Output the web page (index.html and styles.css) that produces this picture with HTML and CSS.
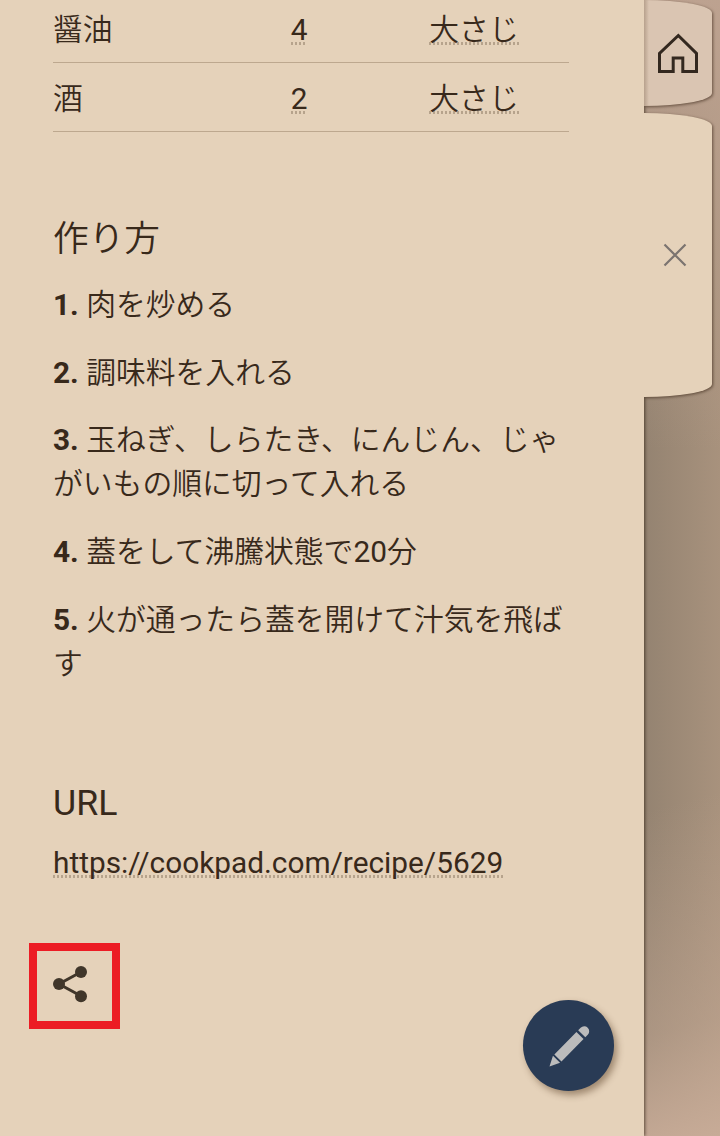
FILE: index.html
```
<!DOCTYPE html>
<html lang="ja">
<head>
<meta charset="utf-8">
<title>レシピ</title>
<link rel="stylesheet" href="styles.css">
</head>
<body>
<div class="app">
  <main class="sheet">
    <div class="ingredients">
      <div class="row"><span class="name">醤油</span><span class="amount"><span class="dotted">4</span></span><span class="unit"><span class="dotted">大さじ</span></span></div>
      <div class="row"><span class="name">酒</span><span class="amount"><span class="dotted">2</span></span><span class="unit"><span class="dotted">大さじ</span></span></div>
    </div>
    <section class="method">
      <h2>作り方</h2>
      <p><b>1.</b> 肉を炒める</p>
      <p><b>2.</b> 調味料を入れる</p>
      <p><b>3.</b> 玉ねぎ、しらたき、にんじん、じゃがいもの順に切って入れる</p>
      <p><b>4.</b> 蓋をして沸騰状態で20分</p>
      <p><b>5.</b> 火が通ったら蓋を開けて汁気を飛ばす</p>
    </section>
    <section class="source">
      <h2>URL</h2>
      <p><a class="dotted link">https://cookpad.com/recipe/5629</a></p>
    </section>
    <div class="share">
      <svg width="75" height="70" viewBox="0 0 75 70" fill="#40362a">
        <path d="M44 21 22 33l22 12" fill="none" stroke="#40362a" stroke-width="3"/>
        <circle cx="44" cy="21" r="6"/><circle cx="22" cy="33" r="6"/><circle cx="44" cy="45.300" r="6"/>
      </svg>
    </div>
  </main>
  <nav class="tabs">
    <div class="tab home">
      <svg width="44" height="44" viewBox="0 0 44 44" fill="none" stroke="#33281f" stroke-width="3">
        <path d="M22.300 4.500 40.500 22.500v18H26.800V27h-9.600v13.500H3.500v-18z"/>
      </svg>
    </div>
    <div class="tab current">
      <svg width="24" height="24" viewBox="0 0 24 24" stroke="#7b7470" stroke-width="2.200">
        <path d="M1.500 1.500l21 21M22.500 1.500l-21 21"/>
      </svg>
    </div>
  </nav>
  <div class="edit">
    <svg width="91" height="91" viewBox="0 0 91 91" fill="#bcbcbc">
      <g transform="translate(26.500 66.500) rotate(-45.500)">
        <path d="M0 0 10-5V5zM12-5H43.500V5H12zM46-5H49.500a5 5 0 0 1 0 10H46z"/>
      </g>
    </svg>
  </div>
</div>
</body>
</html>
```
FILE: styles.css
```
* { box-sizing: border-box; }
body {
  margin: 0;
  color: #38291b;
  font: 400 29.8px/44px Roboto, "Noto Sans CJK JP DemiLight", "Noto Sans CJK JP", sans-serif;
}
.app {
  position: relative;
  display: flex;
  width: 720px;
  height: 1136px;
  overflow: hidden;
  background:
    linear-gradient(165deg, rgba(199,171,151,0) 74%, rgba(199,171,151,.45) 91%, #c7ab97 100%),
    linear-gradient(180deg, rgba(190,163,145,.95) 0, rgba(190,163,145,.6) 150px, rgba(190,163,145,0) 450px),
    linear-gradient(90deg, #948371 644px, #a8927d 720px);
}
.sheet {
  position: relative;
  flex: none;
  width: 644px;
  height: 1142px;
  margin-top: -6px;
  padding: 0 75px 0 53px;
  background: #e5d2ba;
  box-shadow: 1px 0 3px rgba(40,25,10,.65);
}
.row {
  display: grid;
  grid-template-columns: 203px 86px 1fr;
  height: 69px;
  padding-top: 14px;
  border-bottom: 1px solid #bda88f;
}
.amount, .unit { text-align: center; }
.unit { padding-left: 37px; }
.dotted {
  display: inline-block;
  height: 37px;
  background: repeating-linear-gradient(90deg, #b6a38c 0 2px, transparent 2px 4px) 0 34px / 100% 3px no-repeat;
}
h2 {
  margin: 0 0 17px;
  font-size: 35.7px;
  font-weight: 400;
  line-height: 53px;
}
.method { padding-top: 81px; }
.method p { margin: 0 0 23.7px; }
.source { padding-top: 68px; }
.source h2 { margin-bottom: 11px; }
.source p { margin: 0; height: 45px; }
.share {
  width: 91px;
  height: 86px;
  margin: 57px 0 0 -24px;
  border: 8px solid #ec1c24;
}
.share svg { display: block; }
.tabs {
  width: 68px;
}
.tab {
  background: #e5d2ba;
  border-radius: 0 68px 68px 0 / 0 13px 13px 0;
  filter: drop-shadow(1px 1px 1.5px rgba(50,30,15,.6));
  clip-path: inset(-8px -8px -8px 0);
}
.home {
  display: flex;
  align-items: center;
  justify-content: center;
  height: 106px;
  background: linear-gradient(90deg, #b7a18d 0, #dac5b2 5px);
}
.current {
  display: flex;
  position: relative;
  justify-content: center;
  align-items: center;
  height: 284px;
  margin-top: 7px;
  padding-right: 6px;
}
.edit {
  position: absolute;
  left: 523px;
  top: 1000px;
  width: 91px;
  height: 91px;
  border-radius: 50%;
  background: #293b55;
  box-shadow: 3px 4px 7px rgba(70,45,20,.45);
}
.edit svg { display: block; }
```
